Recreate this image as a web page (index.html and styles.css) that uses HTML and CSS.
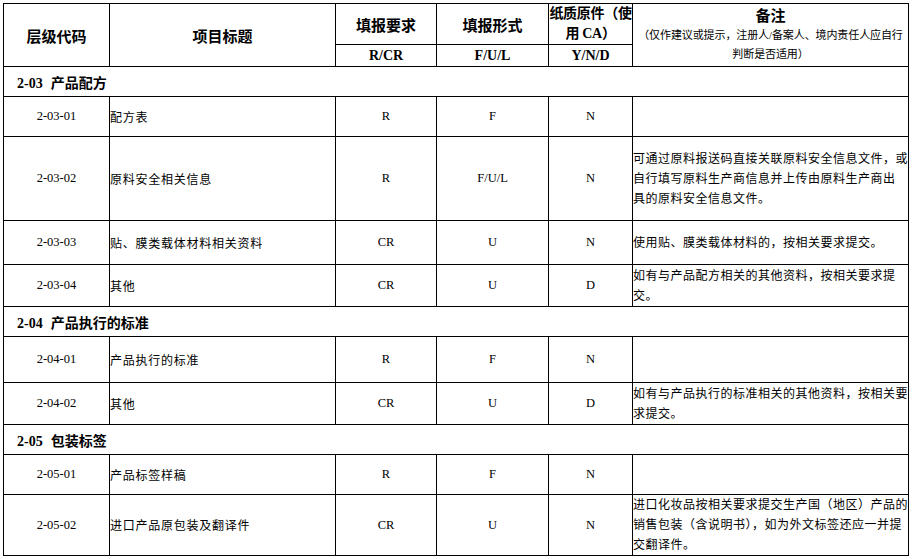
FILE: index.html
```html
<!DOCTYPE html>
<html lang="zh">
<head>
<meta charset="utf-8">
<title>产品配方</title>
<link rel="stylesheet" href="styles.css">
</head>
<body>
<div class="page">
<table class="grid">
  <colgroup>
    <col class="c-code"><col class="c-title"><col class="c-req"><col class="c-form"><col class="c-paper"><col class="c-note">
  </colgroup>
  <thead>
    <tr class="h1">
      <th rowspan="2" class="hd">层级代码</th>
      <th rowspan="2" class="hd">项目标题</th>
      <th class="hd">填报要求</th>
      <th class="hd">填报形式</th>
      <th class="hd paper">纸质原件（使<br>用 CA）</th>
      <th rowspan="2" class="hd note-h"><span class="note-title">备注</span><span class="note-sub">（仅作建议或提示，注册人/备案人、境内责任人应自行<br>判断是否适用）</span></th>
    </tr>
    <tr class="h2">
      <th class="sub">R/CR</th>
      <th class="sub">F/U/L</th>
      <th class="sub">Y/N/D</th>
    </tr>
  </thead>
  <tbody>
    <tr class="sec"><td colspan="6"><span class="sec-no">2-03</span><span class="sec-name">产品配方</span></td></tr>
    <tr class="r40"><td class="code">2-03-01</td><td class="title">配方表</td><td class="mid">R</td><td class="mid">F</td><td class="mid">N</td><td class="note"></td></tr>
    <tr class="r84"><td class="code">2-03-02</td><td class="title">原料安全相关信息</td><td class="mid">R</td><td class="mid">F/U/L</td><td class="mid">N</td><td class="note">可通过原料报送码直接关联原料安全信息文件，或<br>自行填写原料生产商信息并上传由原料生产商出<br>具的原料安全信息文件。</td></tr>
    <tr class="r44"><td class="code">2-03-03</td><td class="title">贴、膜类载体材料相关资料</td><td class="mid">CR</td><td class="mid">U</td><td class="mid">N</td><td class="note">使用贴、膜类载体材料的，按相关要求提交。</td></tr>
    <tr class="r42"><td class="code">2-03-04</td><td class="title">其他</td><td class="mid">CR</td><td class="mid">U</td><td class="mid">D</td><td class="note">如有与产品配方相关的其他资料，按相关要求提<br>交。</td></tr>
    <tr class="sec"><td colspan="6"><span class="sec-no">2-04</span><span class="sec-name">产品执行的标准</span></td></tr>
    <tr class="r46"><td class="code">2-04-01</td><td class="title">产品执行的标准</td><td class="mid">R</td><td class="mid">F</td><td class="mid">N</td><td class="note"></td></tr>
    <tr class="r42"><td class="code">2-04-02</td><td class="title">其他</td><td class="mid">CR</td><td class="mid">U</td><td class="mid">D</td><td class="note">如有与产品执行的标准相关的其他资料，按相关要<br>求提交。</td></tr>
    <tr class="sec"><td colspan="6"><span class="sec-no">2-05</span><span class="sec-name">包装标签</span></td></tr>
    <tr class="r40"><td class="code">2-05-01</td><td class="title">产品标签样稿</td><td class="mid">R</td><td class="mid">F</td><td class="mid">N</td><td class="note"></td></tr>
    <tr class="r61"><td class="code">2-05-02</td><td class="title">进口产品原包装及翻译件</td><td class="mid">CR</td><td class="mid">U</td><td class="mid">N</td><td class="note">进口化妆品按相关要求提交生产国（地区）产品的<br>销售包装（含说明书），如为外文标签还应一并提<br>交翻译件。</td></tr>
  </tbody>
</table>
</div>
</body>
</html>
```
FILE: styles.css
```css
html, body {
  margin: 0;
  padding: 0;
  background: #ffffff;
}
.page {
  padding: 3px 0 0 3px;
}
.grid {
  border-collapse: collapse;
  table-layout: fixed;
  width: 906px;
  font-family: "Liberation Serif", "Noto Sans CJK SC", serif;
  color: #000;
}
.grid td, .grid th {
  border: 1px solid #000;
  padding: 0;
  vertical-align: middle;
  overflow: hidden;
}
.c-code { width: 106px; }
.c-title { width: 226px; }
.c-req { width: 101px; }
.c-form { width: 112px; }
.c-paper { width: 84px; }
.c-note { width: 276px; }

.h1 { height: 41px; }
.h2 { height: 22px; }
.hd {
  font-size: 15px;
  font-weight: bold;
  text-align: center;
}
.paper {
  font-size: 14px;
  line-height: 20px;
  white-space: nowrap;
  letter-spacing: -0.3px;
}
.note-h {
  line-height: 18px;
}
.note-title {
  display: block;
  font-size: 15px;
  font-weight: bold;
  line-height: 20px;
}
.note-sub {
  display: block;
  font-size: 11px;
  font-weight: normal;
  line-height: 19px;
  white-space: nowrap;
  letter-spacing: -0.1px;
}
.sub {
  font-size: 14px;
  font-weight: bold;
  text-align: center;
  line-height: 18px;
}

.sec { height: 30px; }
.sec td {
  padding-left: 13px;
  font-size: 14px;
  font-weight: bold;
}
.sec-no { margin-right: 8px; }

.r40 { height: 40px; }
.r42 { height: 42px; }
.r44 { height: 44px; }
.r46 { height: 46px; }
.r61 { height: 61px; }
.r84 { height: 84px; }

.code {
  font-size: 12.5px;
  text-align: center;
}
.title {
  font-size: 12px;
  letter-spacing: 0.75px;
  white-space: nowrap;
  padding-left: 1px;
}
.mid {
  font-size: 12.5px;
  text-align: center;
}
.note {
  font-size: 12px;
  line-height: 20px;
  letter-spacing: 0.5px;
  white-space: nowrap;
  padding-left: 1px;
}
```
